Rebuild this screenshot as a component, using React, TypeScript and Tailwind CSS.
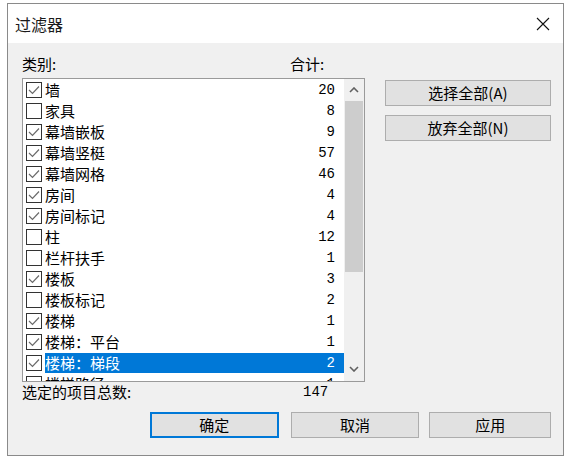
import React from 'react';

const cjk = { fontFamily: '"Noto Sans CJK SC", "Liberation Sans", sans-serif' };
const mono = { fontFamily: '"Liberation Mono", "Noto Sans CJK SC", monospace' };

const rows: { name: string; count: number; checked: boolean }[] = [
  { name: '墙', count: 20, checked: true },
  { name: '家具', count: 8, checked: false },
  { name: '幕墙嵌板', count: 9, checked: true },
  { name: '幕墙竖梃', count: 57, checked: true },
  { name: '幕墙网格', count: 46, checked: true },
  { name: '房间', count: 4, checked: true },
  { name: '房间标记', count: 4, checked: true },
  { name: '柱', count: 12, checked: false },
  { name: '栏杆扶手', count: 1, checked: false },
  { name: '楼板', count: 3, checked: true },
  { name: '楼板标记', count: 2, checked: false },
  { name: '楼梯', count: 1, checked: true },
  { name: '楼梯：平台', count: 1, checked: true },
  { name: '楼梯：梯段', count: 2, checked: true },
  { name: '楼梯路径', count: 1, checked: false },
];

function Check({ checked }: { checked: boolean }) {
  return (
    <div className="w-[16px] h-[16px] border border-[#333333] bg-white flex items-center justify-center shrink-0">
      {checked && (
        <svg width="12" height="10" viewBox="0 0 12 10">
          <polyline points="1,5 4.5,8.5 11,1.5" fill="none" stroke="#6b6b6b" strokeWidth="1.2" />
        </svg>
      )}
    </div>
  );
}

function Button({ label, primary, className }: { label: string; primary?: boolean; className?: string }) {
  return (
    <div
      className={
        'h-[26px] flex items-center justify-center bg-[#e1e1e1] text-[15px] text-black border ' +
        (primary ? 'border-[#0078d7] shadow-[inset_0_0_0_1px_#0078d7]' : 'border-[#adadad]') +
        ' ' +
        (className ?? '')
      }
      style={cjk}>
      {label}
    </div>
  );
}

export default function App() {
  return (
    <div className="w-[571px] h-[461px] bg-white pl-[7px] pt-[3px]">
      <div className="w-[557px] h-[453px] border border-[#8a8a8a] flex flex-col bg-[#f0f0f0]">
        <div className="h-[39px] bg-white flex items-center justify-between pl-[7px] pr-[13px]">
          <span className="text-[16px] text-[#1a1a1a]" style={cjk}>
            过滤器
          </span>
          <svg width="14" height="14" viewBox="0 0 14 14">
            <path d="M1 1 L13 13 M13 1 L1 13" stroke="#111" strokeWidth="1.1" />
          </svg>
        </div>

        <div className="flex-1 pl-[14px] pr-[12px] pt-[11px]">
          <div className="flex">
            <div className="w-[343px]">
              <div className="h-[18px] flex items-center text-[15px] text-black leading-none" style={cjk}>
                <span className="w-[268px]">类别:</span>
                <span>合计:</span>
              </div>
              <div className="mt-[6px] h-[304px] border border-[#9a9a9a] bg-white flex overflow-hidden">
                <div className="flex-1 overflow-hidden">
                  {rows.map((r, i) => {
                    const sel = i === 13;
                    return (
                      <div key={i} className="h-[21px] flex items-center">
                        <div className="pl-[3px] pr-[3px]">
                          <Check checked={r.checked} />
                        </div>
                        <div
                          className={
                            'flex-1 h-[20px] flex items-center justify-between pr-[9px] ' +
                            (sel ? 'bg-[#0078d7] text-white' : 'text-black')
                          }>
                          <span className="text-[15px] leading-none" style={cjk}>
                            {r.name}
                          </span>
                          <span className="text-[14px] leading-none" style={mono}>
                            {r.count}
                          </span>
                        </div>
                      </div>
                    );
                  })}
                </div>
                <div className="w-[20px] bg-[#f0f0f0] flex flex-col items-center">
                  <div className="h-[22px] flex items-center justify-center">
                    <svg width="10" height="6" viewBox="0 0 10 6">
                      <polyline points="1,5 5,1 9,5" fill="none" stroke="#606060" strokeWidth="1.6" />
                    </svg>
                  </div>
                  <div className="w-[18px] h-[171px] bg-[#cdcdcd]" />
                  <div className="flex-1" />
                  <div className="h-[24px] flex items-center justify-center">
                    <svg width="10" height="6" viewBox="0 0 10 6">
                      <polyline points="1,1 5,5 9,1" fill="none" stroke="#606060" strokeWidth="1.6" />
                    </svg>
                  </div>
                </div>
              </div>
              <div className="h-[19px] flex items-center text-black" style={cjk}>
                <span className="w-[281px] text-[15px] leading-none">选定的项目总数:</span>
                <span className="text-[14px] leading-none" style={mono}>
                  147
                </span>
              </div>
            </div>
            <div className="ml-[20px] mt-[26px] flex flex-col gap-[9px] w-[166px]">
              <Button label="选择全部(A)" />
              <Button label="放弃全部(N)" />
            </div>
          </div>

          <div className="mt-[11px] flex">
            <Button label="确定" primary className="ml-[128px] w-[129px]" />
            <Button label="取消" className="ml-[12px] w-[129px]" />
            <Button label="应用" className="ml-[10px] w-[122px]" />
          </div>
        </div>
      </div>
    </div>
  );
}
